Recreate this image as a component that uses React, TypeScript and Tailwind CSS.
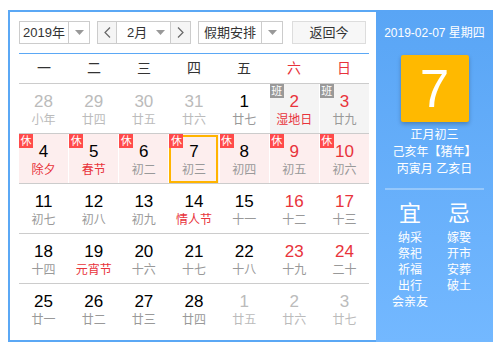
import React from "react";

type Day = {
  n: number;
  lunar: string;
  muted?: boolean;
  red?: boolean;
  lunarRed?: boolean;
  badge?: "休" | "班";
  selected?: boolean;
};

const weeks: Day[][] = [
  [
    { n: 28, lunar: "小年", muted: true },
    { n: 29, lunar: "廿四", muted: true },
    { n: 30, lunar: "廿五", muted: true },
    { n: 31, lunar: "廿六", muted: true },
    { n: 1, lunar: "廿七" },
    { n: 2, lunar: "湿地日", red: true, lunarRed: true, badge: "班" },
    { n: 3, lunar: "廿九", red: true, badge: "班" },
  ],
  [
    { n: 4, lunar: "除夕", lunarRed: true, badge: "休" },
    { n: 5, lunar: "春节", lunarRed: true, badge: "休" },
    { n: 6, lunar: "初二", badge: "休" },
    { n: 7, lunar: "初三", badge: "休", selected: true },
    { n: 8, lunar: "初四", badge: "休" },
    { n: 9, lunar: "初五", red: true, badge: "休" },
    { n: 10, lunar: "初六", red: true, badge: "休" },
  ],
  [
    { n: 11, lunar: "初七" },
    { n: 12, lunar: "初八" },
    { n: 13, lunar: "初九" },
    { n: 14, lunar: "情人节", lunarRed: true },
    { n: 15, lunar: "十一" },
    { n: 16, lunar: "十二", red: true },
    { n: 17, lunar: "十三", red: true },
  ],
  [
    { n: 18, lunar: "十四" },
    { n: 19, lunar: "元宵节", lunarRed: true },
    { n: 20, lunar: "十六" },
    { n: 21, lunar: "十七" },
    { n: 22, lunar: "十八" },
    { n: 23, lunar: "十九", red: true },
    { n: 24, lunar: "二十", red: true },
  ],
  [
    { n: 25, lunar: "廿一" },
    { n: 26, lunar: "廿二" },
    { n: 27, lunar: "廿三" },
    { n: 28, lunar: "廿四" },
    { n: 1, lunar: "廿五", muted: true },
    { n: 2, lunar: "廿六", muted: true },
    { n: 3, lunar: "廿七", muted: true },
  ],
];

const Caret = () => (
  <svg width="9" height="5" viewBox="0 0 9 5">
    <path d="M0 0h9L4.5 5z" fill="#999" />
  </svg>
);

const Chevron = ({ dir }: { dir: "l" | "r" }) => (
  <svg width="7" height="11" viewBox="0 0 7 11">
    <polyline
      points={dir === "l" ? "6,0.5 1,5.5 6,10.5" : "1,0.5 6,5.5 1,10.5"}
      fill="none"
      stroke="#666"
      strokeWidth="1.2"
    />
  </svg>
);

const Cell = ({ d }: { d: Day }) => {
  let bg = "bg-white";
  if (d.badge === "休") bg = "bg-[#fdeeee]";
  if (d.badge === "班") bg = "bg-[#f4f4f4]";
  const numColor = d.muted ? "text-[#bbb]" : d.red ? "text-[#e8333b]" : "text-black";
  const lunarColor = d.muted ? "text-[#bbb]" : d.lunarRed ? "text-[#e8333b]" : "text-[#999]";
  return (
    <div className={`relative h-[49px] flex flex-col items-center pt-2 ${bg}`}>
      {d.selected && <div className="absolute left-0 right-[1px] top-px bottom-0 border-2 border-[#ffb400]" />}
      {d.badge && (
        <div
          className={`absolute left-0 top-0 w-[14px] h-[14px] flex items-center justify-center text-[11px] leading-none text-white ${
            d.badge === "休" ? "bg-[#ff4a4a]" : "bg-[#999]"
          }`}
        >
          {d.badge}
        </div>
      )}
      <div className={`text-[17px] leading-[20px] ${numColor}`}>{d.n}</div>
      <div className={`text-[12px] leading-[16px] ${lunarColor}`}>{d.lunar}</div>
    </div>
  );
};

export default function App() {
  const font = { fontFamily: '"Liberation Sans", "Noto Sans CJK SC", sans-serif' };
  const heads = ["一", "二", "三", "四", "五", "六", "日"];
  return (
    <div className="w-[500px] h-[350px] bg-white pl-2 pt-[10px]" style={font}>
      <div className="flex w-[485px] h-[332px]">
        <div className="w-[368px] border-l-2 border-t-2 border-b-2 border-[#5ba8f5] pl-[9px] pr-[7px] pt-[9px]">
          <div className="flex items-center h-[23px] text-[13px] text-[#333]">
            <div className="flex w-[71px] h-[23px] border border-[#ccc]">
              <div className="flex-1 flex items-center justify-center">2019年</div>
              <div className="w-[21px] border-l border-[#ccc] flex items-center justify-center">
                <Caret />
              </div>
            </div>
            <div className="flex ml-[7px] w-[94px] h-[23px] border border-[#ccc]">
              <div className="w-[19px] bg-[#f5f5f5] flex items-center justify-center border-r border-[#ccc]">
                <Chevron dir="l" />
              </div>
              <div className="flex-1 flex items-center justify-between pl-[10px] pr-[5px]">
                <span>2月</span>
                <Caret />
              </div>
              <div className="w-[20px] bg-[#f5f5f5] flex items-center justify-center border-l border-[#ccc]">
                <Chevron dir="r" />
              </div>
            </div>
            <div className="flex ml-[7px] w-[85px] h-[23px] border border-[#ccc]">
              <div className="flex-1 flex items-center justify-center">假期安排</div>
              <div className="w-[21px] border-l border-[#ccc] flex items-center justify-center">
                <Caret />
              </div>
            </div>
            <div className="ml-[9px] w-[74px] h-[23px] border border-[#ddd] bg-[#f7f7f7] flex items-center justify-center">
              返回今
            </div>
          </div>

          <div className="mt-[9px] w-[350px] border-t border-[#5ba8f5]">
            <div className="grid grid-cols-7 h-[30px] border-b border-[#ccc] text-[14px]">
              {heads.map((h, i) => (
                <div key={h} className={`flex items-center justify-center ${i >= 5 ? "text-[#e8333b]" : "text-[#333]"}`}>
                  {h}
                </div>
              ))}
            </div>
            {weeks.map((w, i) => (
              <div key={i} className={`grid grid-cols-7 gap-x-px ${i < 4 ? "border-b border-[#ccc]" : ""}`}>
                {w.map((d, j) => (
                  <Cell key={j} d={d} />
                ))}
              </div>
            ))}
          </div>
        </div>

        <div className="w-[117px] bg-gradient-to-b from-[#59a5f5] to-[#73b8ff] text-white flex flex-col items-center pt-4">
          <div className="text-[12px] leading-[14px]">2019-02-07 星期四</div>
          <div className="mt-[15px] w-[68px] h-[67px] bg-[#ffb900] rounded-[2px] shadow-[0_2px_4px_rgba(0,0,0,0.25)] flex items-center justify-center text-[53px] leading-none">
            7
          </div>
          <div className="mt-[5px] text-[12px] leading-[17px] text-center">
            <div>正月初三</div>
            <div>己亥年【猪年】</div>
            <div>丙寅月 乙亥日</div>
          </div>
          <div className="mt-[10px] w-[99px] h-[2px] bg-white/30" />
          <div className="mt-[11px] flex w-[98px]">
            {[
              { t: "宜", items: ["纳采", "祭祀", "祈福", "出行", "会亲友"] },
              { t: "忌", items: ["嫁娶", "开市", "安葬", "破土"] },
            ].map((c) => (
              <div key={c.t} className="w-[49px] flex flex-col items-center">
                <div className="text-[22px] leading-[26px]">{c.t}</div>
                <div className="mt-[3px] text-[12px] leading-[16px] text-center">
                  {c.items.map((x) => (
                    <div key={x}>{x}</div>
                  ))}
                </div>
              </div>
            ))}
          </div>
        </div>
      </div>
    </div>
  );
}
